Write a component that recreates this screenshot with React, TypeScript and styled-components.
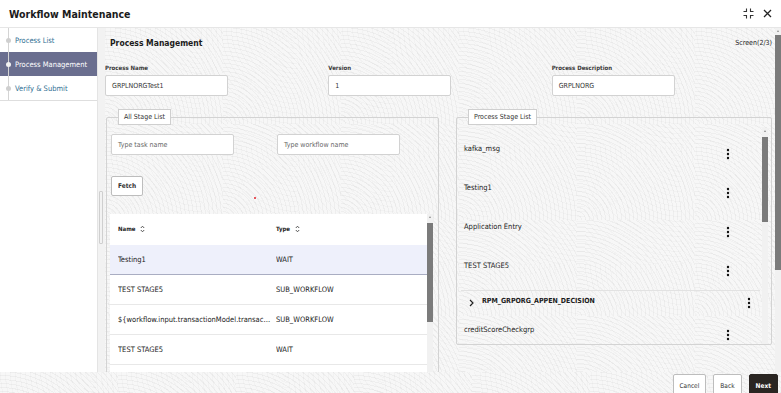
import styled, { createGlobalStyle } from "styled-components";

const GlobalStyle = createGlobalStyle`
  html, body {
    margin: 0;
    padding: 0;
  }
  body {
    font-family: "DejaVu Sans Condensed", "Liberation Sans", sans-serif;
    color: #222;
  }
  * {
    box-sizing: border-box;
  }
`;

const pattern = `
  background-color: #f7f7f7;
  background-image:
    repeating-radial-gradient(circle at 0% 100%, rgba(0, 0, 0, 0.035) 0 1px, transparent 1px 4px),
    repeating-radial-gradient(circle at 100% 0%, rgba(0, 0, 0, 0.02) 0 1px, transparent 1px 5px);
  background-size: 118px 96px, 96px 118px;
`;

const Page = styled.div`
  width: 781px;
  height: 393px;
  display: flex;
  flex-direction: column;
  overflow: hidden;
  background: #fff;
`;

const Header = styled.header`
  height: 28px;
  flex: none;
  display: flex;
  align-items: center;
  justify-content: space-between;
  padding: 0 9px 0 9px;
  border-bottom: 1px solid #e6e6e6;
`;

const Title = styled.h1`
  margin: 0;
  font-size: 10.5px;
  font-weight: 700;
  color: #1b1b1b;
`;

const HeaderIcons = styled.div`
  display: flex;
  align-items: center;
  gap: 9px;
`;

const Body = styled.div`
  flex: none;
  height: 344px;
  display: flex;
`;

const Sidebar = styled.nav`
  width: 97px;
  flex: none;
  background: #fff;
`;

const Steps = styled.ul`
  list-style: none;
  margin: 0;
  padding: 0;
  border-bottom: 1px solid #dedede;
`;

const Step = styled.li<{ $active?: boolean }>`
  height: 24px;
  display: flex;
  align-items: center;
  gap: 4px;
  padding-left: 6px;
  font-size: 7.5px;
  white-space: nowrap;
  color: ${(p) => (p.$active ? "#fff" : "#2f6f93")};
  background: ${(p) => (p.$active ? "#6a6e8f" : "transparent")};
  position: relative;

  &::before {
    content: "";
    position: absolute;
    left: 8px;
    top: 0;
    bottom: 0;
    width: 1px;
    background: #d4d4d4;
  }
`;

const StepDot = styled.span<{ $active?: boolean }>`
  width: 5px;
  height: 5px;
  border-radius: 50%;
  background: ${(p) => (p.$active ? "#f2f2f2" : "#cfcfcf")};
  position: relative;
  z-index: 1;
`;

const SideTrack = styled.div`
  width: 8px;
  flex: none;
  background: #f2f2f2;
  border-left: 1px solid #e4e4e4;
  padding-top: 163px;
`;

const SideThumb = styled.div`
  width: 4px;
  height: 53px;
  margin-left: 1px;
  border: 1px solid #cfcfcf;
  border-radius: 1px;
`;

const Main = styled.main`
  flex: 1;
  display: flex;
  min-width: 0;
  ${pattern}
`;

const Content = styled.div`
  flex: 1;
  min-width: 0;
  overflow: hidden;
`;

const TopRow = styled.div`
  height: 29px;
  display: flex;
  align-items: center;
  justify-content: space-between;
  padding: 0 3px 0 5px;
`;

const Heading = styled.h2`
  margin: 0;
  font-size: 8.5px;
  font-weight: 700;
  color: #1b1b1b;
`;

const ScreenNo = styled.span`
  font-size: 7px;
  color: #222;
`;

const FieldGrid = styled.div`
  display: grid;
  grid-template-columns: repeat(3, 1fr);
  margin-top: 7px;
`;

const Field = styled.div`
  display: flex;
  flex-direction: column;
  gap: 4px;
`;

const Label = styled.label`
  font-size: 6px;
  font-weight: 700;
  color: #3a3a3a;
`;

const Input = styled.div<{ $placeholder?: boolean }>`
  width: 123px;
  height: 21px;
  display: flex;
  align-items: center;
  padding: 0 6px;
  background: #fff;
  border: 1px solid #d2d2d2;
  border-radius: 2px;
  font-size: 7px;
  color: ${(p) => (p.$placeholder ? "#666" : "#333")};
`;

const Panels = styled.div`
  display: grid;
  grid-template-columns: 333px 316px;
  column-gap: 17px;
  margin: 13px 0 0 1px;
  align-items: start;
`;

const Box = styled.fieldset<{ $height: number }>`
  margin: 0;
  padding: 0 4px;
  height: ${(p) => p.$height}px;
  border: 1px solid #d3d3d3;
  border-radius: 2px;
  min-width: 0;
`;

const Legend = styled.legend`
  margin-left: 7px;
  height: 16px;
  padding: 0 5px;
  display: flex;
  align-items: center;
  background: #fff;
  border: 1px solid #cfcfcf;
  font-size: 7px;
  color: #333;
`;

const SearchRow = styled.div`
  display: grid;
  grid-template-columns: 123px 123px;
  column-gap: 43px;
  margin-top: 9px;
`;

const FetchRow = styled.div`
  display: flex;
  margin-top: 21px;
`;

const Button = styled.button<{ $primary?: boolean }>`
  height: 20px;
  padding: 0 6px;
  font-family: inherit;
  font-size: 6.5px;
  font-weight: 700;
  border-radius: 2px;
  border: 1px solid ${(p) => (p.$primary ? "#2a2522" : "#bdbdbd")};
  background: ${(p) => (p.$primary ? "#2a2522" : "#fff")};
  color: ${(p) => (p.$primary ? "#fff" : "#333")};
`;

const RedDot = styled.span`
  width: 2px;
  height: 2px;
  margin: 0 0 -3px 111px;
  align-self: flex-end;
  background: #e0202a;
  border-radius: 50%;
`;

const Table = styled.div`
  display: flex;
  margin: 18px 0 0 -1px;
  width: 323px;
  height: 160px;
`;

const TableBody = styled.div`
  flex: 1;
  min-width: 0;
  background: #fff;
`;

const Row = styled.div<{ $head?: boolean; $selected?: boolean }>`
  display: grid;
  grid-template-columns: 158px 1fr;
  align-items: center;
  height: ${(p) => (p.$head ? 31 : 30)}px;
  padding: ${(p) => (p.$head ? "0 0 1px 8px" : "0 0 0 8px")};
  font-size: ${(p) => (p.$head ? 6 : 7.5)}px;
  font-weight: ${(p) => (p.$head ? 700 : 400)};
  color: #222;
  background: ${(p) => (p.$selected ? "#eef0fb" : "transparent")};
  border-bottom: 1px solid ${(p) => (p.$head ? "transparent" : p.$selected ? "#a9adc2" : "#e8e8e8")};
`;

const HeadCell = styled.span`
  display: flex;
  align-items: center;
  gap: 5px;
`;

const Cell = styled.span`
  display: block;
  white-space: nowrap;
  overflow: hidden;
  text-overflow: ellipsis;
  padding-right: 4px;
`;

const Scroll = styled.div<{ $top: number; $thumb: number }>`
  width: 6px;
  flex: none;
  background: #f1f1f1;
  display: flex;
  flex-direction: column;
  align-items: center;
  padding-top: 2px;

  &::after {
    content: "";
    display: block;
    width: 100%;
    height: ${(p) => p.$thumb}px;
    margin-top: ${(p) => p.$top}px;
    background: #7b7b7b;
  }
`;

const ArrowUp = styled.span`
  width: 0;
  height: 0;
  border-left: 1.5px solid transparent;
  border-right: 1.5px solid transparent;
  border-bottom: 2px solid #8a8a8a;
`;

const StageList = styled.div`
  display: flex;
  height: 216px;
  margin: 3px -1px 0 0;
  overflow: hidden;
`;

const StageItems = styled.div`
  flex: 1;
  min-width: 0;
  padding-top: 6px;
`;

const StageRow = styled.div`
  height: 39px;
  display: flex;
  align-items: center;
  justify-content: space-between;
  padding: 0 32px 0 3px;
  font-size: 7.5px;
  color: #222;
`;

const StageName = styled.span`
  padding-bottom: 10px;
`;

const Group = styled.div`
  border-top: 1px solid #e2e2e2;
  margin: 0 2px 0 -4px;
`;

const GroupHead = styled.div`
  height: 24px;
  display: flex;
  align-items: center;
  gap: 8px;
  padding: 0 9px 0 12px;
  font-size: 7px;
  font-weight: 700;
  color: #1b1b1b;
`;

const GroupTitle = styled.span`
  flex: 1;
  padding-bottom: 5px;
`;

const GroupBody = styled.div`
  padding-left: 4px;
  margin-right: -2px;
`;

const Footer = styled.footer`
  flex: 1;
  display: flex;
  justify-content: flex-end;
  align-items: flex-start;
  gap: 7px;
  padding: 2px 3px 0 0;
  ${pattern}
`;

const FootButton = styled(Button)`
  height: 24px;
  padding: 0 6px;
  font-weight: ${(p) => (p.$primary ? 700 : 400)};
`;

const Kebab = () => (
  <svg width="4" height="12" viewBox="0 0 4 12">
    <circle cx="2" cy="2" r="1.2" fill="#111" />
    <circle cx="2" cy="6" r="1.2" fill="#111" />
    <circle cx="2" cy="10" r="1.2" fill="#111" />
  </svg>
);

const SortIcon = () => (
  <svg width="5" height="8" viewBox="0 0 5 8">
    <path d="M0.8 3 L2.5 1.2 L4.2 3 M0.8 5 L2.5 6.8 L4.2 5" fill="none" stroke="#444" strokeWidth="0.9" />
  </svg>
);

const Chevron = () => (
  <svg width="5" height="8" viewBox="0 0 5 8">
    <path d="M1 1 L4 4 L1 7" fill="none" stroke="#222" strokeWidth="1.2" />
  </svg>
);

const CollapseIcon = () => (
  <svg width="11" height="11" viewBox="0 0 11 11">
    <path
      d="M3.5 0.5 V3.5 H0.5 M7.5 0.5 V3.5 H10.5 M0.5 7.5 H3.5 V10.5 M10.5 7.5 H7.5 V10.5"
      fill="none"
      stroke="#333"
      strokeWidth="1.1"
    />
  </svg>
);

const CloseIcon = () => (
  <svg width="9" height="9" viewBox="0 0 9 9">
    <path d="M1 1 L8 8 M8 1 L1 8" stroke="#222" strokeWidth="1.3" />
  </svg>
);

const tasks = [
  { name: "Testing1", type: "WAIT", selected: true },
  { name: "TEST STAGE5", type: "SUB_WORKFLOW" },
  { name: "${workflow.input.transactionModel.transactionType}", type: "SUB_WORKFLOW" },
  { name: "TEST STAGE5", type: "WAIT" },
  { name: "kafka_msg", type: "KAFKA_PUBLISH" },
];

const stages = ["kafka_msg", "Testing1", "Application Entry", "TEST STAGE5"];

export default function App() {
  return (
    <>
      <GlobalStyle />
      <Page>
        <Header>
          <Title>Workflow Maintenance</Title>
          <HeaderIcons>
            <CollapseIcon />
            <CloseIcon />
          </HeaderIcons>
        </Header>

        <Body>
          <Sidebar>
            <Steps>
              <Step>
                <StepDot />
                Process List
              </Step>
              <Step $active>
                <StepDot $active />
                Process Management
              </Step>
              <Step>
                <StepDot />
                Verify &amp; Submit
              </Step>
            </Steps>
          </Sidebar>
          <SideTrack>
            <SideThumb />
          </SideTrack>

          <Main>
            <Content>
              <TopRow>
                <Heading>Process Management</Heading>
                <ScreenNo>Screen(2/3)</ScreenNo>
              </TopRow>

              <FieldGrid>
                <Field>
                  <Label>Process Name</Label>
                  <Input>GRPLNORGTest1</Input>
                </Field>
                <Field>
                  <Label>Version</Label>
                  <Input>1</Input>
                </Field>
                <Field>
                  <Label>Process Description</Label>
                  <Input>GRPLNORG</Input>
                </Field>
              </FieldGrid>

              <Panels>
                <Box $height={270}>
                  <Legend>All Stage List</Legend>
                  <SearchRow>
                    <Input $placeholder>Type task name</Input>
                    <Input $placeholder>Type workflow name</Input>
                  </SearchRow>
                  <FetchRow>
                    <Button>Fetch</Button>
                    <RedDot />
                  </FetchRow>
                  <Table>
                    <TableBody>
                      <Row $head>
                        <HeadCell>
                          Name <SortIcon />
                        </HeadCell>
                        <HeadCell>
                          Type <SortIcon />
                        </HeadCell>
                      </Row>
                      {tasks.map((t, i) => (
                        <Row key={i} $selected={t.selected}>
                          <Cell>{t.name}</Cell>
                          <Cell>{t.type}</Cell>
                        </Row>
                      ))}
                    </TableBody>
                    <Scroll $top={5} $thumb={99}>
                      <ArrowUp />
                    </Scroll>
                  </Table>
                </Box>

                <Box $height={236}>
                  <Legend>Process Stage List</Legend>
                  <StageList>
                    <StageItems>
                      {stages.map((s) => (
                        <StageRow key={s}>
                          <StageName>{s}</StageName>
                          <Kebab />
                        </StageRow>
                      ))}
                      <Group>
                        <GroupHead>
                          <Chevron />
                          <GroupTitle>RPM_GRPORG_APPEN_DECISION</GroupTitle>
                          <Kebab />
                        </GroupHead>
                        <GroupBody>
                          <StageRow>
                            <StageName>creditScoreCheckgrp</StageName>
                            <Kebab />
                          </StageRow>
                        </GroupBody>
                      </Group>
                    </StageItems>
                    <Scroll $top={5} $thumb={85}>
                      <ArrowUp />
                    </Scroll>
                  </StageList>
                </Box>
              </Panels>
            </Content>
            <Scroll $top={3} $thumb={235}>
              <ArrowUp />
            </Scroll>
          </Main>
        </Body>

        <Footer>
          <FootButton>Cancel</FootButton>
          <FootButton>Back</FootButton>
          <FootButton $primary>Next</FootButton>
        </Footer>
      </Page>
    </>
  );
}
